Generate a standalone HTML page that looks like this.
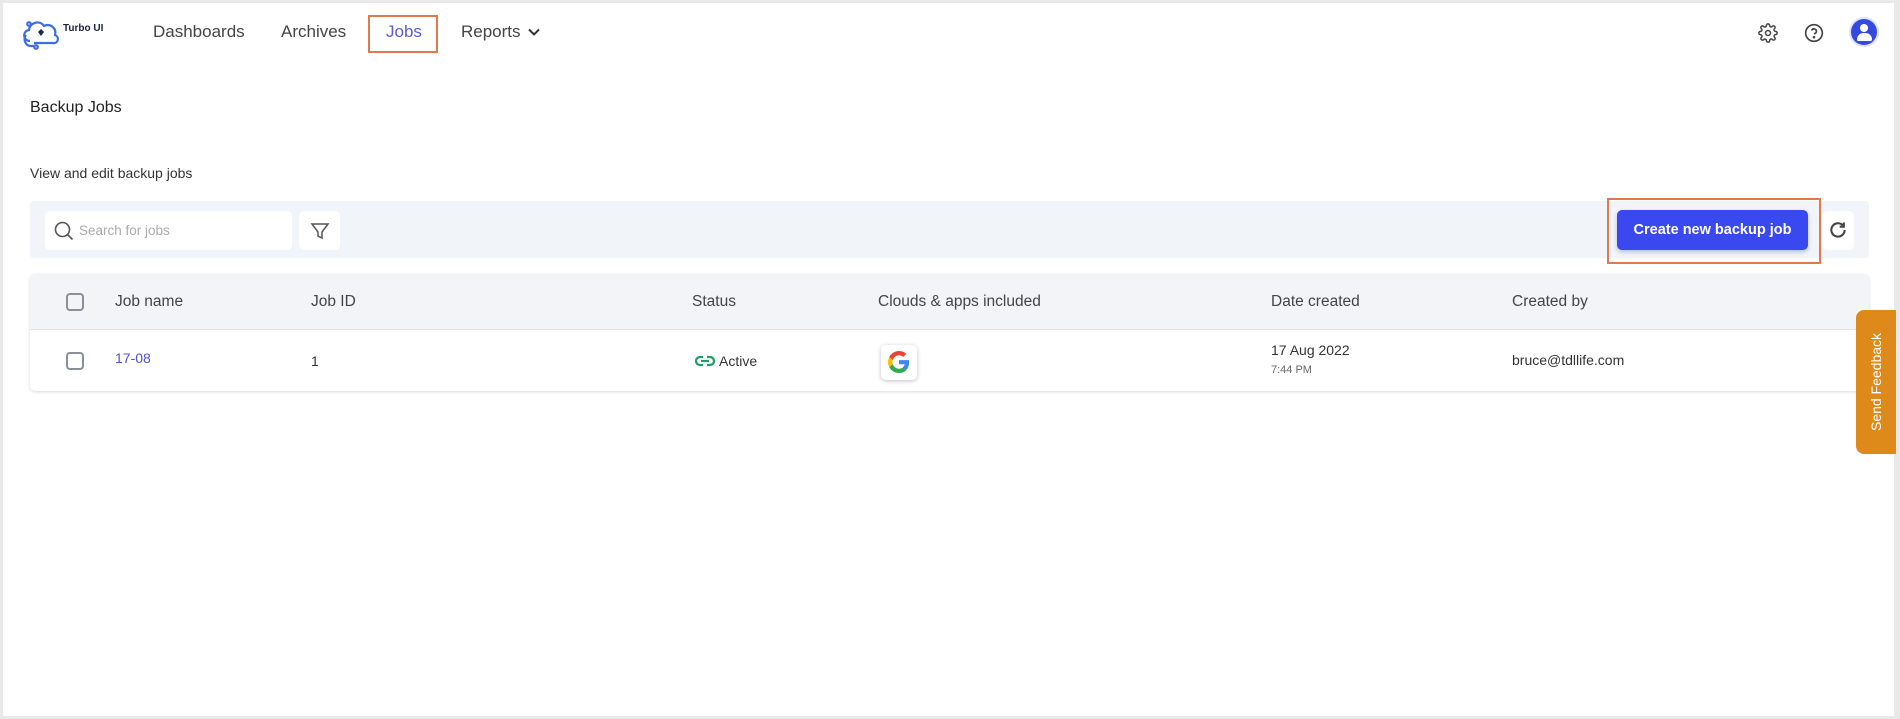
<!DOCTYPE html>
<html><head><meta charset="utf-8"><style>
*{margin:0;padding:0;box-sizing:border-box}
body{width:1900px;height:719px;background:#e9e9e9;font-family:"Liberation Sans",sans-serif;color:#333;position:relative;overflow:hidden}
.frame{position:absolute;left:3px;top:3px;width:1891px;height:713px;background:#fff}
.a{position:absolute;white-space:nowrap}
.nav{font-size:17px;color:#444;top:22px}
.th{font-size:15.5px;color:#444;top:293px}
.td{font-size:14px;color:#333}
.cb{position:absolute;width:18px;height:18px;border:2px solid #8a8f99;border-radius:4px}
</style></head><body>
<div class="frame"></div>
<svg class="a" style="left:20px;top:15px" width="44" height="36" viewBox="0 0 44 36" fill="none" stroke="#3b6fe0" stroke-width="2.2"><path d="M10 26 C3 26 2 16 9 15 C10 7 20 5 24 11 C30 8 37 13 35 20 C40 22 38 29 33 28 L14 28"/><path d="M6 20 C3 24 5 30 10 31 L14 31"/><circle cx="16" cy="32" r="1.8"/><circle cx="9" cy="9" r="1.8"/><path d="M21 14 l3 3 -3 4 -3 -4z" fill="#1b2a55" stroke="none"/></svg>
<div class="a" style="left:63px;top:23px;font-size:10px;font-weight:bold;color:#1b2340">Turbo UI</div>
<div class="a nav" style="left:153px">Dashboards</div>
<div class="a nav" style="left:281px">Archives</div>
<div class="a" style="left:368px;top:15px;width:70px;height:38px;border:2.5px solid #e07a4d"></div>
<div class="a nav" style="left:386px;color:#5b5bd6">Jobs</div>
<div class="a nav" style="left:461px">Reports</div>
<svg class="a" style="left:528px;top:28px" width="12" height="9" viewBox="0 0 12 9"><path d="M1 1.5l5 5 5-5" stroke="#333" stroke-width="2" fill="none"/></svg>
<svg class="a" style="left:1758px;top:23px" width="20" height="20" viewBox="0 0 24 24" fill="none" stroke="#444" stroke-width="1.8"><circle cx="12" cy="12" r="3"/><path d="M19.4 15a1.7 1.7 0 0 0 .3 1.8l.1.1a2 2 0 1 1-2.8 2.8l-.1-.1a1.7 1.7 0 0 0-1.8-.3 1.7 1.7 0 0 0-1 1.5V21a2 2 0 1 1-4 0v-.1a1.7 1.7 0 0 0-1.1-1.5 1.7 1.7 0 0 0-1.8.3l-.1.1a2 2 0 1 1-2.8-2.8l.1-.1a1.7 1.7 0 0 0 .3-1.8 1.7 1.7 0 0 0-1.5-1H3a2 2 0 1 1 0-4h.1a1.7 1.7 0 0 0 1.5-1.1 1.7 1.7 0 0 0-.3-1.8l-.1-.1a2 2 0 1 1 2.8-2.8l.1.1a1.7 1.7 0 0 0 1.8.3H9a1.7 1.7 0 0 0 1-1.5V3a2 2 0 1 1 4 0v.1a1.7 1.7 0 0 0 1 1.5 1.7 1.7 0 0 0 1.8-.3l.1-.1a2 2 0 1 1 2.8 2.8l-.1.1a1.7 1.7 0 0 0-.3 1.8V9a1.7 1.7 0 0 0 1.5 1H21a2 2 0 1 1 0 4h-.1a1.7 1.7 0 0 0-1.5 1z"/></svg>
<svg class="a" style="left:1804px;top:23px" width="20" height="20" viewBox="0 0 24 24" fill="none" stroke="#444" stroke-width="2"><circle cx="12" cy="12" r="10"/><path d="M9.1 9a3 3 0 0 1 5.8 1c0 2-3 3-3 3"/><circle cx="12" cy="17" r=".6" fill="#444"/></svg>
<div class="a" style="left:1851px;top:19px;width:26px;height:26px;border-radius:50%;background:#3549e0;box-shadow:0 0 0 2px #dfe3fb;overflow:hidden">
<div class="a" style="left:9px;top:5px;width:8px;height:8px;border-radius:50%;background:#fff"></div>
<div class="a" style="left:5.5px;top:14px;width:15px;height:8px;border-radius:8px 8px 2px 2px;background:#fff"></div></div>
<div class="a" style="left:30px;top:99px;font-size:16px;color:#222">Backup Jobs</div>
<div class="a" style="left:30px;top:165px;font-size:14px;color:#333">View and edit backup jobs</div>
<div class="a" style="left:30px;top:201px;width:1839px;height:57px;background:#f1f4f8;border-radius:4px"></div>
<div class="a" style="left:45px;top:211px;width:247px;height:39px;background:#fff;border-radius:5px"></div>
<svg class="a" style="left:54px;top:221px" width="20" height="20" viewBox="0 0 20 20" fill="none" stroke="#555" stroke-width="1.6"><circle cx="8.5" cy="8.5" r="7"/><path d="M13.5 13.5l5 5"/></svg>
<div class="a" style="left:79px;top:223px;font-size:13.5px;color:#aaa">Search for jobs</div>
<div class="a" style="left:299px;top:211px;width:41px;height:39px;background:#fff;border-radius:5px"></div>
<svg class="a" style="left:310px;top:221px" width="20" height="20" viewBox="0 0 20 20" fill="none" stroke="#555" stroke-width="1.5"><path d="M2 3h16l-6 8v6l-4-2v-4z"/></svg>
<div class="a" style="left:1607px;top:198px;width:214px;height:66px;border:2.5px solid #e07a4d"></div>
<div class="a" style="left:1617px;top:210px;width:191px;height:40px;background:#3a48f0;border-radius:5px;box-shadow:0 2px 4px rgba(50,60,200,.3);color:#fff;font-weight:bold;font-size:14.5px;text-align:center;line-height:40px">Create new backup job</div>
<div class="a" style="left:1822px;top:211px;width:32px;height:39px;background:#fff;border-radius:5px"></div>
<svg class="a" style="left:1828px;top:220px" width="20" height="20" viewBox="0 0 24 24" fill="none" stroke="#444" stroke-width="2.5"><path d="M20 12a8 8 0 1 1-2.3-5.7"/><path d="M19 3v5h-5" /></svg>
<div class="a" style="left:30px;top:274px;width:1839px;height:117px;border-radius:5px;box-shadow:0 1px 3px rgba(0,0,0,.15);background:#fff;overflow:hidden">
<div class="a" style="left:0;top:0;width:1839px;height:56px;background:#f3f4f8;border-bottom:1px solid #e3e5ea"></div></div>
<div class="cb" style="left:66px;top:293px"></div>
<div class="a th" style="left:115px">Job name</div>
<div class="a th" style="left:311px">Job ID</div>
<div class="a th" style="left:692px">Status</div>
<div class="a th" style="left:878px">Clouds &amp; apps included</div>
<div class="a th" style="left:1271px">Date created</div>
<div class="a th" style="left:1512px">Created by</div>
<div class="cb" style="left:66px;top:352px"></div>
<div class="a td" style="left:115px;top:350px;color:#5050d8">17-08</div>
<div class="a td" style="left:311px;top:353px">1</div>
<svg class="a" style="left:695px;top:355px" width="20" height="12" viewBox="0 0 20 12" fill="none" stroke="#1f9d6a" stroke-width="2.2"><path d="M8 2H5a4 4 0 0 0 0 8h3M12 2h3a4 4 0 0 1 0 8h-3M6 6h8"/></svg>
<div class="a td" style="left:719px;top:353px">Active</div>
<div class="a" style="left:881px;top:345px;width:36px;height:35px;background:#fff;border-radius:5px;box-shadow:0 1px 4px rgba(0,0,0,.25)"></div>
<svg class="a" style="left:888px;top:351px" width="22" height="22" viewBox="0 0 48 48"><path fill="#EA4335" d="M24 9.5c3.5 0 6.6 1.2 9.1 3.6l6.8-6.8C35.8 2.4 30.3 0 24 0 14.6 0 6.6 5.4 2.6 13.3l7.9 6.2C12.4 13.7 17.7 9.5 24 9.5z"/><path fill="#4285F4" d="M46.1 24.5c0-1.6-.1-3.1-.4-4.5H24v9h12.4c-.5 2.9-2.2 5.3-4.6 7l7.5 5.8c4.3-4 6.8-10 6.8-17.3z"/><path fill="#FBBC05" d="M10.5 28.6A14.5 14.5 0 0 1 10.5 19.4l-7.9-6.2A24 24 0 0 0 0 24c0 3.9.9 7.5 2.6 10.7l7.9-6.1z"/><path fill="#34A853" d="M24 48c6.5 0 11.9-2.1 15.9-5.8l-7.5-5.8c-2.1 1.4-4.8 2.3-8.4 2.3-6.3 0-11.6-4.2-13.5-10l-7.9 6.1C6.6 42.6 14.6 48 24 48z"/></svg>
<div class="a td" style="left:1271px;top:342px">17 Aug 2022</div>
<div class="a" style="left:1271px;top:364px;font-size:11px;color:#666">7:44 PM</div>
<div class="a td" style="left:1512px;top:352px">bruce@tdllife.com</div>
<div class="a" style="left:1856px;top:310px;width:40px;height:144px;background:#dd8a1b;border-radius:8px 0 0 8px"></div>
<div class="a" style="left:1876px;top:382px;transform:translate(-50%,-50%) rotate(-90deg);color:#fff;font-size:14px">Send Feedback</div>
</body></html>
